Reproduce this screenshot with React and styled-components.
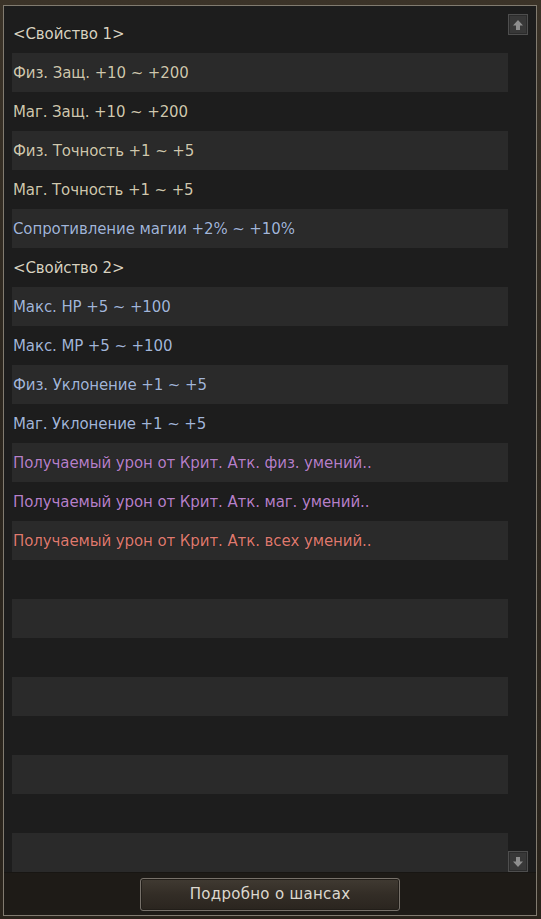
import React from 'react';
import styled, { createGlobalStyle } from 'styled-components';

const GlobalStyle = createGlobalStyle`
  html, body {
    margin: 0;
    padding: 0;
    background: #2b251d;
  }
  * { box-sizing: border-box; }
`;

const Frame = styled.div`
  width: 541px;
  height: 919px;
  padding: 5px 4px 3px 3px;
  background: linear-gradient(180deg, #3b3328 0%, #2c261e 40%, #2a241c 100%);
`;

const Panel = styled.div`
  height: 100%;
  display: flex;
  flex-direction: column;
  border: 1px solid #817b70;
  background: #1d1d1d;
`;

const ListArea = styled.div`
  display: flex;
  padding: 8px 8px 0 8px;
  flex: 0 0 auto;
`;

const List = styled.div`
  flex: 1;
  display: flex;
  flex-direction: column;
`;

const Row = styled.div`
  height: 39px;
  display: flex;
  align-items: center;
  padding-left: 1px;
  background: ${p => (p.$odd ? '#2a2a2a' : 'transparent')};
  font-family: 'DejaVu Sans', Verdana, sans-serif;
  font-size: 15px;
  letter-spacing: -0.1px;
  white-space: nowrap;
  color: ${p => p.$color};
  text-shadow: 0 0 1px rgba(0, 0, 0, 0.6);
`;

const ScrollBar = styled.div`
  width: 20px;
  display: flex;
  flex-direction: column;
  justify-content: space-between;
`;

const ScrollButton = styled.div`
  width: 20px;
  height: 21px;
  display: flex;
  align-items: center;
  justify-content: center;
  background: #383838;
  border: 1px solid #4e4e4e;
  box-shadow: inset 0 0 0 1px #2c2c2c;
`;

const BottomBar = styled.div`
  flex: 1;
  display: flex;
  align-items: center;
  justify-content: center;
  background: #1e1b17;
  border-top: 1px solid #181613;
`;

const DetailButton = styled.button`
  width: 260px;
  height: 33px;
  border: 1px solid #77716a;
  border-radius: 3px;
  background: linear-gradient(180deg, #403a32 0%, #332d26 50%, #2a251f 100%);
  box-shadow: inset 0 0 0 1px #221e19;
  color: #dcd8cf;
  font-family: 'DejaVu Sans', Verdana, sans-serif;
  font-size: 15px;
  letter-spacing: 0.3px;
  padding: 0;
`;

const Arrow = ({ down }) => (
  <svg width="12" height="12" viewBox="0 0 12 12" style={down ? { transform: 'rotate(180deg)' } : undefined}>
    <path d="M6 1 L11 6.5 H8 V11 H4 V6.5 H1 Z" fill="#8e8e8e" />
  </svg>
);

const BEIGE = '#cfc7ae';
const HEAD = '#d8d2c0';
const BLUE = '#a2b5d8';
const PURPLE = '#b680c8';
const RED = '#de7a70';

const rows = [
  ['<Свойство 1>', HEAD],
  ['Физ. Защ. +10 ~ +200', BEIGE],
  ['Маг. Защ. +10 ~ +200', BEIGE],
  ['Физ. Точность +1 ~ +5', BEIGE],
  ['Маг. Точность +1 ~ +5', BEIGE],
  ['Сопротивление магии +2% ~ +10%', BLUE],
  ['<Свойство 2>', HEAD],
  ['Макс. HP +5 ~ +100', BLUE],
  ['Макс. MP +5 ~ +100', BLUE],
  ['Физ. Уклонение +1 ~ +5', BLUE],
  ['Маг. Уклонение +1 ~ +5', BLUE],
  ['Получаемый урон от Крит. Атк. физ. умений..', PURPLE],
  ['Получаемый урон от Крит. Атк. маг. умений..', PURPLE],
  ['Получаемый урон от Крит. Атк. всех умений..', RED],
];

const App = () => {
  const all = [...rows];
  while (all.length < 22) all.push(['', BEIGE]);
  return (
    <Frame>
      <GlobalStyle />
      <Panel>
        <ListArea>
          <List>
            {all.map(([text, color], i) => (
              <Row key={i} $odd={i % 2 === 1} $color={color}>{text}</Row>
            ))}
          </List>
          <ScrollBar>
            <ScrollButton><Arrow /></ScrollButton>
            <ScrollButton><Arrow down /></ScrollButton>
          </ScrollBar>
        </ListArea>
        <BottomBar>
          <DetailButton>Подробно о шансах</DetailButton>
        </BottomBar>
      </Panel>
    </Frame>
  );
};

export default App;
